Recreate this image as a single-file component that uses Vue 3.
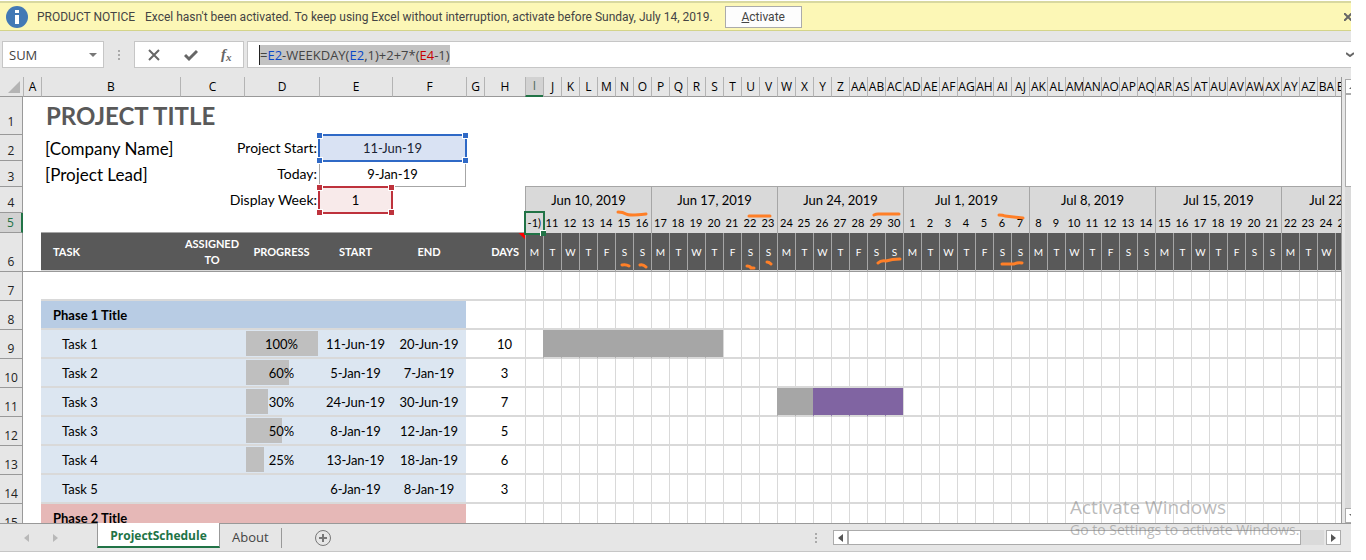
<template>
  <div class="excel">
    <div class="notice">
      <svg class="info" viewBox="0 0 22 22"><circle cx="11" cy="11" r="11" /><path d="M9 4h4v3h-4zM9 9h4v9h-4z" /></svg>
      <span class="notice-title">PRODUCT NOTICE</span>
      <span class="notice-text">Excel hasn't been activated. To keep using Excel without interruption, activate before Sunday, July 14, 2019.</span>
      <button class="activate"><u>A</u>ctivate</button>
      <button class="close" aria-label="Close"><svg viewBox="0 0 8 8"><path d="M0 0l8 8M8 0l-8 8" /></svg></button>
    </div>

    <div class="formula-bar">
      <div class="name-box">
        <select aria-label="Name box"><option>SUM</option></select>
        <svg viewBox="0 0 8 4"><path d="M0 0h8l-4 4z" /></svg>
      </div>
      <div class="dots"><i></i><i></i><i></i></div>
      <div class="fx-buttons">
        <button aria-label="Cancel"><svg viewBox="0 0 14 14"><path d="M2 2l10 10M12 2l-10 10" /></svg></button>
        <button aria-label="Enter"><svg viewBox="0 0 14 14"><path class="thick" d="M1 7l4 4 8-8" /></svg></button>
        <button class="fx" aria-label="Insert function">f<sub>x</sub></button>
      </div>
      <div class="formula">
        <input v-model="formula" type="text" aria-label="Formula">
        <span class="formula-text" aria-hidden="true"><span v-for="(p, i) in parts" :key="i" :class="p.color">{{ p.text }}</span></span>
        <svg class="expand" viewBox="0 0 8 5"><path d="M0 1l4 3 4-3" /></svg>
      </div>
    </div>

    <div class="workspace">
      <div class="sheet">
        <table>
          <colgroup>
            <col class="w-row"><col class="w-a"><col class="w-b"><col class="w-c"><col class="w-d">
            <col class="w-e"><col class="w-f"><col class="w-g"><col class="w-h">
            <col v-for="d in days" :key="d.col" class="w-day">
          </colgroup>
          <thead>
            <tr class="letters">
              <th class="corner"><svg viewBox="0 0 12 12"><path d="M12 0v12h-12z" /></svg></th>
              <th v-for="l in 'ABCDEFGH'" :key="l">{{ l }}</th>
              <th v-for="d in days" :key="d.col" :class="{ active: d.col === 'I' }">{{ d.col }}</th>
            </tr>
          </thead>
          <tbody>
            <tr class="r1">
              <th>1</th><td></td>
              <td colspan="56" class="title">PROJECT TITLE</td>
            </tr>
            <tr class="r2">
              <th>2</th><td></td>
              <td class="big">[Company Name]</td>
              <td colspan="2" class="label">Project Start:</td>
              <td colspan="2" class="center ref blue">11-Jun-19<span class="box"><i></i><i></i><i></i><i></i></span></td>
              <td colspan="51"></td>
            </tr>
            <tr class="r2">
              <th>3</th><td></td>
              <td class="big">[Project Lead]</td>
              <td colspan="2" class="label">Today:</td>
              <td colspan="2" class="center today">9-Jan-19</td>
              <td colspan="2"></td>
              <td colspan="49" class="cal-top"></td>
            </tr>
            <tr class="r2">
              <th>4</th><td></td><td></td>
              <td colspan="2" class="label">Display Week:</td>
              <td class="center ref red">1<span class="box"><i></i><i></i><i></i><i></i></span></td>
              <td colspan="3"></td>
              <td v-for="w in weeks" :key="w" colspan="7" class="week">{{ w }}</td>
            </tr>
            <tr class="r5">
              <th class="active">5</th><td></td>
              <td colspan="7" class="rule"></td>
              <td v-for="(d, i) in days" :key="d.col" class="day" :class="{ first: i % 7 === 0, editing: i === 0 }">{{ i ? d.date : '-1)' }}<span v-if="i === 0" class="cursor"></span></td>
            </tr>
            <tr class="r6">
              <th>6</th><td></td>
              <td class="head task">TASK</td>
              <td class="head">ASSIGNED<br>TO</td>
              <td class="head">PROGRESS</td>
              <td class="head">START</td>
              <td class="head">END</td>
              <td class="head"></td>
              <td class="head note">DAYS</td>
              <td v-for="(d, i) in days" :key="d.col" class="head weekday">{{ 'MTWTFSS'[i % 7] }}</td>
            </tr>
            <tr v-for="r in rows" :key="r.n" class="row" :class="r.kind">
              <th>{{ r.n }}</th><td class="blank"></td>
              <td class="fill name">{{ r.name }}</td>
              <td class="fill"></td>
              <td class="fill progress"><span v-if="r.progress" class="bar" :style="{ width: r.progress * 0.96 + '%' }"></span><span class="pct">{{ r.progress ? r.progress + '%' : '' }}</span></td>
              <td class="fill">{{ r.start }}</td>
              <td class="fill">{{ r.end }}</td>
              <td></td>
              <td>{{ r.days }}</td>
              <td v-for="(d, i) in days" :key="d.col" class="slot" :class="slotClass(r, i)"></td>
            </tr>
          </tbody>
        </table>
        <!-- pen marks over the weekends -->
        <svg class="ink" viewBox="0 0 1341 446">
          <path d="M618 135q5 0 8 2q3 2 20 0M749 139h21M874 138q2-1 4-1h21M999 138q4 0 6 1l18 2M622 188q4-1 7 1M640 188q3-1 6 2M747 189q3 0 4 2h3M767 185q2 0 4 2M878 186q3-3 8-2q6-2 14-2M1002 187h12q4-2 8-1" />
        </svg>
      </div>
      <div class="vscroll">
        <button aria-label="Scroll up"><svg viewBox="0 0 8 8"><path d="M0 6l4-4 4 4z" /></svg></button>
        <div class="vthumb"></div>
        <div class="vtrack"></div>
        <button aria-label="Scroll down"><svg viewBox="0 0 8 8"><path d="M0 2l4 4 4-4z" /></svg></button>
      </div>
    </div>

    <div class="tab-bar">
      <div class="nav">
        <button aria-label="Previous sheet"><svg viewBox="0 0 5 8"><path d="M5 0v8l-5-4z" /></svg></button>
        <button aria-label="Next sheet"><svg viewBox="0 0 5 8"><path d="M0 0v8l5-4z" /></svg></button>
      </div>
      <button class="tab current">ProjectSchedule</button>
      <button class="tab">About</button>
      <button class="add" aria-label="New sheet"><svg viewBox="0 0 18 18"><circle cx="9" cy="9" r="7.5" /><path d="M9 5v8M5 9h8" /></svg></button>
      <div class="dots"><i></i><i></i><i></i></div>
      <div class="hscroll">
        <button aria-label="Scroll left"><svg viewBox="0 0 5 8"><path d="M5 0v8l-5-4z" /></svg></button>
        <div class="hthumb"></div>
        <div class="htrack"></div>
        <button aria-label="Scroll right"><svg viewBox="0 0 5 8"><path d="M0 0v8l5-4z" /></svg></button>
      </div>
    </div>

    <div class="watermark">
      <div class="wm-title">Activate Windows</div>
      <div class="wm-text">Go to Settings to activate Windows.</div>
    </div>
  </div>
</template>

<script setup>
import { ref } from 'vue'

const formula = ref('=E2-WEEKDAY(E2,1)+2+7*(E4-1)')
const parts = [
  { text: '=' },
  { text: 'E2', color: 'c-blue' },
  { text: '-WEEKDAY(' },
  { text: 'E2', color: 'c-blue' },
  { text: ',1)+2+7*(' },
  { text: 'E4', color: 'c-red' },
  { text: '-1)' }
]

const weeks = ['Jun 10, 2019', 'Jun 17, 2019', 'Jun 24, 2019', 'Jul 1, 2019', 'Jul 8, 2019', 'Jul 15, 2019', 'Jul 22, 2019']

const colName = n => (n >= 26 ? String.fromCharCode(64 + Math.floor(n / 26)) : '') + String.fromCharCode(65 + n % 26)

// calendar starts in column I, on June 10
const days = Array.from({ length: 49 }, (_, i) => ({
  col: colName(i + 8),
  date: i < 21 ? i + 10 : i - 20
}))

const rows = [
  { n: 7, kind: 'empty' },
  { n: 8, kind: 'phase phase1', name: 'Phase 1 Title' },
  { n: 9, kind: 'item', name: 'Task 1', progress: 100, start: '11-Jun-19', end: '20-Jun-19', days: 10, from: 1, done: 10 },
  { n: 10, kind: 'item', name: 'Task 2', progress: 60, start: '5-Jan-19', end: '7-Jan-19', days: 3 },
  { n: 11, kind: 'item', name: 'Task 3', progress: 30, start: '24-Jun-19', end: '30-Jun-19', days: 7, from: 14, done: 2 },
  { n: 12, kind: 'item', name: 'Task 3', progress: 50, start: '8-Jan-19', end: '12-Jan-19', days: 5 },
  { n: 13, kind: 'item', name: 'Task 4', progress: 25, start: '13-Jan-19', end: '18-Jan-19', days: 6 },
  { n: 14, kind: 'item', name: 'Task 5', start: '6-Jan-19', end: '8-Jan-19', days: 3 },
  { n: 15, kind: 'phase phase2', name: 'Phase 2 Title' }
]

const slotClass = (r, i) => {
  if (r.from === undefined || i < r.from || i >= r.from + r.days) return ''
  return i < r.from + r.done ? 'done' : 'planned'
}
</script>

<style>
body { background: #fff; overflow: hidden; }
</style>

<style scoped>
* { box-sizing: border-box; }
.excel { position: relative; height: 100vh; padding: 0 15px 8px 0; display: flex; flex-direction: column; font-family: "Open Sans", "Noto Sans", sans-serif; font-size: 12px; color: #444; }
button { padding: 0; border: none; background: none; font: inherit; color: inherit; }
svg { display: block; }

.notice { display: flex; align-items: center; flex: none; height: 30px; margin-top: 1px; padding-left: 6px; background: #fcf7b6; border-top: 2px solid #d8d8a0; border-bottom: 1px solid #d4d48a; font-family: Roboto, "Open Sans", sans-serif; white-space: nowrap; overflow: hidden; }
.info { width: 22px; height: 22px; fill: #4379b5; }
.info path { fill: #fff; }
.notice-title { width: 98px; margin-left: 9px; }
.notice-text { margin-left: 10px; }
.activate { width: 77px; height: 22px; margin-left: 12px; background: #fdfdfd; border: 1px solid #ababab; }
.close { margin-left: auto; margin-right: -1px; }
.close svg { width: 8px; height: 8px; stroke: #666; stroke-width: 2; }

.formula-bar { display: flex; flex: none; height: 46px; padding: 10px 0 9px; background: #e6e6e6; }
.name-box { display: flex; align-items: center; width: 102px; margin-left: 2px; padding-right: 6px; background: #fff; border: 1px solid #c6c6c6; }
.name-box select { flex: 1; height: 24px; padding: 0 6px; border: none; background: none; appearance: none; font: inherit; font-size: 13px; color: #444; }
.name-box svg { width: 8px; height: 4px; fill: #777; }
.dots { display: flex; flex-direction: column; justify-content: center; gap: 2px; }
.dots i { width: 2px; height: 2px; background: #aaa; }
.formula-bar .dots { margin: 0 14px; }
.fx-buttons { display: flex; align-items: center; justify-content: space-around; width: 110px; background: #fff; border: 1px solid #c6c6c6; }
.fx-buttons svg { width: 14px; height: 14px; fill: none; stroke: #666; stroke-width: 2; }
.fx-buttons .thick { stroke-width: 3; }
.fx { font: italic bold 15px "Liberation Serif", serif; color: #666; }
.fx sub { font-size: 11px; vertical-align: -2px; }
.formula { display: grid; flex: 1; align-items: center; justify-items: start; margin-left: 3px; padding-left: 11px; background: #fff; border: 1px solid #c6c6c6; border-right: none; }
.formula input, .formula-text, .expand { grid-area: 1 / 1; }
.formula input { width: 100%; height: 20px; padding: 0; border: none; outline: none; background: none; font: inherit; color: transparent; }
.formula-text { height: 20px; line-height: 20px; font-size: 13px; background: #c3c3c3; border-left: 1px solid #222; white-space: nowrap; }
.c-blue { color: #0a47c8; }
.c-red { color: #c80000; }
.expand { justify-self: end; margin-right: -3px; width: 8px; height: 5px; fill: none; stroke: #666; stroke-width: 2; }

.workspace { display: flex; flex: 1; min-height: 0; background: #e6e6e6; }
.sheet { position: relative; flex: 1; min-width: 0; overflow: hidden; border-right: 1px solid #999; }
table { width: 1407px; table-layout: fixed; border-collapse: separate; border-spacing: 0; background: #fff; font-family: Lato, "Open Sans", sans-serif; font-size: 13px; color: #000; }
.w-row { width: 23px; }
.w-a { width: 18px; }
.w-b { width: 139px; }
.w-c { width: 64px; }
.w-d { width: 75px; }
.w-e { width: 73px; }
.w-f { width: 74px; }
.w-g { width: 18px; }
.w-h { width: 41px; }
.w-day { width: 18px; }
th, td { padding: 0; white-space: nowrap; line-height: 16px; }
th { background: #e6e6e6; font-family: "Open Sans", "Noto Sans", sans-serif; font-weight: 400; font-size: 12px; color: #222; }
.letters th { height: 20px; overflow: hidden; border-left: 1px solid #b4b4b4; border-bottom: 1px solid #999; color: #000; }
.letters .corner { border-left: none; }
.letters .active { background: #d2d2d2; border-bottom: 2px solid #217346; color: #4f6b5a; }
.corner svg { width: 12px; height: 12px; margin-left: 8px; fill: #b4b4b4; }
tbody th { padding-bottom: 1px; vertical-align: bottom; border-right: 1px solid #999; border-bottom: 1px solid #999; }
tbody th.active { background: #d2d2d2; color: #217346; border-right: 2px solid #217346; }

.r1 { height: 38px; }
.r1 th { padding-bottom: 4px; }
.r2 { height: 26px; }
.r5 { height: 20px; }
.r6 { height: 39px; }
.title { padding-left: 5px; font-size: 24px; font-weight: 700; line-height: 30px; color: #595959; }
.big { padding: 2px 0 0 4px; font-size: 17px; line-height: 20px; }
.label { padding-right: 2px; font-size: 14px; text-align: right; }
.center { text-align: center; }
.today { border: 1px solid #a6a6a6; border-top: none; }
.cal-top { border-bottom: 1px solid #a6a6a6; }
.week { background: #d9d9d9; border-left: 1px solid #a6a6a6; text-align: center; }
.rule { border-bottom: 1px solid #a6a6a6; }
.day { background: #d9d9d9; text-align: center; font-size: 11px; }
.day.first { border-left: 1px solid #a6a6a6; }

/* range highlights while the formula is edited */
.ref, .editing { position: relative; }
.ref.blue { background: #d9e2f3; color: #1a2233; }
.ref.red { background: #f8eaea; }
.box { position: absolute; inset: -1px; border: 2px solid #2f69c6; }
.red .box { border-color: #be323c; }
.box i { position: absolute; width: 7px; height: 7px; background: #2f69c6; border: 1px solid #fff; }
.red .box i { background: #be323c; }
.box i:nth-child(1) { top: -4px; left: -4px; }
.box i:nth-child(2) { top: -4px; right: -4px; }
.box i:nth-child(3) { bottom: -4px; left: -4px; }
.box i:nth-child(4) { bottom: -4px; right: -4px; }
.day.editing { text-align: right; padding-right: 2px; }
.cursor { position: absolute; inset: -2px; border: 2px solid #217346; }
.cursor::after { content: ""; position: absolute; right: -3px; bottom: -3px; width: 5px; height: 5px; background: #217346; border: solid #fff; border-width: 1px 0 0 1px; }

.r6 th, .r6 td { border-bottom: 1px solid #999; }
.head { background: #595959; box-shadow: inset 0 -1px #d9d9d9; color: #fff; font-size: 11px; font-weight: 700; text-align: center; }
.head.task { padding-left: 12px; text-align: left; }
.head.note { padding-right: 6px; text-align: right; background: linear-gradient(225deg, #f00 4px, #595959 5px); }
.head.weekday { border-left: 1px solid #a6a6a6; font-size: 10px; font-weight: 400; }

.row { height: 29px; }
.row td { border-bottom: 2px solid #d9d9d9; text-align: center; }
.row .blank { border-bottom: none; }
.row .name { text-align: left; padding-left: 21px; }
.phase .name { padding-left: 12px; font-weight: 700; }
.phase1 .fill { background: #b8cce4; }
.phase2 .fill { background: #e6b8b7; }
.item .fill { background: #dce6f1; }
.progress { position: relative; }
.bar { position: absolute; left: 2px; top: 1px; bottom: 1px; background: #bfbfbf; }
.pct { position: relative; }
.slot { border-left: 1px solid #d9d9d9; }
.slot.done { background: #a6a6a6; border-left-color: #a6a6a6; }
.slot.planned { background: #8064a2; border-left-color: #8064a2; }
.ink { position: absolute; top: 0; left: 0; width: 1341px; height: 446px; fill: none; stroke: #ff7f27; stroke-width: 3; stroke-linecap: round; pointer-events: none; }

.vscroll { display: flex; flex-direction: column; width: 6px; margin-left: 3px; padding-top: 2px; overflow: hidden; }
.vscroll button { flex: none; width: 15px; height: 15px; background: #fff; border: 1px solid #ababab; }
.vscroll svg { width: 8px; height: 8px; margin-left: 3px; fill: #666; }
.vthumb { width: 15px; height: 93px; background: #fff; border: 1px solid #ababab; }
.vtrack { flex: 1; background: #dadada; }

.tab-bar { display: flex; align-items: center; flex: none; height: 29px; background: #e6e6e6; border-top: 1px solid #999; border-bottom: 1px solid #c6c6c6; }
.nav { display: flex; gap: 24px; width: 97px; padding-left: 24px; }
.nav svg { width: 5px; height: 8px; fill: #b8b8b8; }
.tab { height: 20px; padding: 0 12px 2px; border-right: 1px solid #999; font-size: 13px; }
.tab.current { align-self: flex-start; width: 123px; height: 25px; margin-top: -1px; padding: 2px 0 0; background: #fff; border-left: 1px solid #999; border-bottom: 2px solid #217346; color: #217346; font-size: 12px; font-weight: 700; }
.add { margin-left: 32px; }
.add svg { width: 18px; height: 18px; fill: none; stroke: #777; }
.add path { stroke-width: 2; }
.tab-bar .dots { margin-left: auto; margin-right: 16px; }
.hscroll { display: flex; width: 508px; height: 15px; margin-right: 10px; }
.hscroll button { width: 15px; background: #fff; border: 1px solid #ababab; }
.hscroll svg { width: 5px; height: 8px; margin: 0 auto; fill: #555; }
.hthumb { flex: 1; background: #fff; border: 1px solid #ababab; }
.htrack { width: 23px; margin-right: 2px; background: #dadada; }

.watermark { position: absolute; right: 60px; bottom: 20px; width: 236px; color: rgba(120, 120, 120, 0.5); white-space: nowrap; pointer-events: none; }
.wm-title { font-size: 19px; line-height: 26px; }
.wm-text { font-size: 14px; line-height: 20px; }
</style>
